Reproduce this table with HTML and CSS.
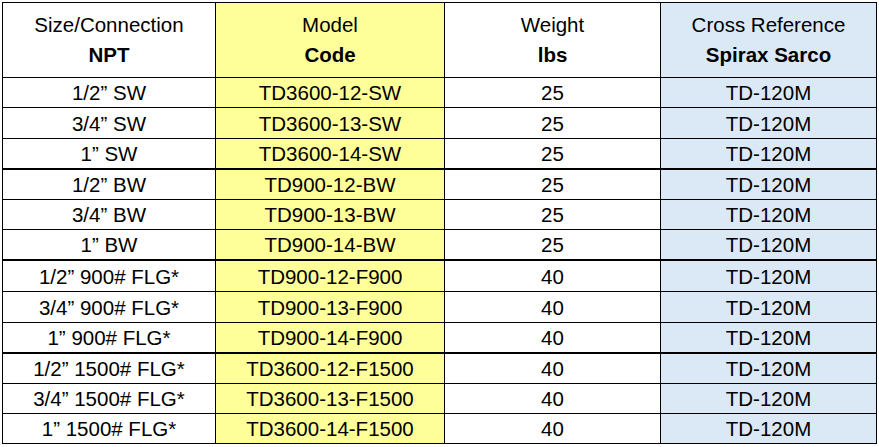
FILE: index.html
```html
<!DOCTYPE html>
<html>
<head>
<meta charset="utf-8">
<link rel="stylesheet" href="styles.css">
</head>
<body>
<div class="sheet">
  <div class="c h"><span>Size/Connection</span><b>NPT</b></div>
  <div class="c h y"><span>Model</span><b>Code</b></div>
  <div class="c h"><span>Weight</span><b>lbs</b></div>
  <div class="c h bl"><span>Cross Reference</span><b>Spirax Sarco</b></div>

  <div class="c r30">1/2” SW</div><div class="c y r30">TD3600-12-SW</div><div class="c r30">25</div><div class="c bl r30">TD-120M</div>
  <div class="c r31">3/4” SW</div><div class="c y r31">TD3600-13-SW</div><div class="c r31">25</div><div class="c bl r31">TD-120M</div>
  <div class="c r31 t">1” SW</div><div class="c y r31 t">TD3600-14-SW</div><div class="c r31 t">25</div><div class="c bl r31 t">TD-120M</div>

  <div class="c r30">1/2” BW</div><div class="c y r30">TD900-12-BW</div><div class="c r30">25</div><div class="c bl r30">TD-120M</div>
  <div class="c r30">3/4” BW</div><div class="c y r30">TD900-13-BW</div><div class="c r30">25</div><div class="c bl r30">TD-120M</div>
  <div class="c r31 t">1” BW</div><div class="c y r31 t">TD900-14-BW</div><div class="c r31 t">25</div><div class="c bl r31 t">TD-120M</div>

  <div class="c r31">1/2” 900# FLG*</div><div class="c y r31">TD900-12-F900</div><div class="c r31">40</div><div class="c bl r31">TD-120M</div>
  <div class="c r31">3/4” 900# FLG*</div><div class="c y r31">TD900-13-F900</div><div class="c r31">40</div><div class="c bl r31">TD-120M</div>
  <div class="c r31 t">1” 900# FLG*</div><div class="c y r31 t">TD900-14-F900</div><div class="c r31 t">40</div><div class="c bl r31 t">TD-120M</div>

  <div class="c r30">1/2” 1500# FLG*</div><div class="c y r30">TD3600-12-F1500</div><div class="c r30">40</div><div class="c bl r30">TD-120M</div>
  <div class="c r30">3/4” 1500# FLG*</div><div class="c y r30">TD3600-13-F1500</div><div class="c r30">40</div><div class="c bl r30">TD-120M</div>
  <div class="c r30">1” 1500# FLG*</div><div class="c y r30">TD3600-14-F1500</div><div class="c r30">40</div><div class="c bl r30">TD-120M</div>
</div>
</body>
</html>
```
FILE: styles.css
```css
html, body {
  margin: 0;
  padding: 0;
  background: #ffffff;
}
.sheet {
  margin: 2px 0 0 2px;
  display: grid;
  grid-template-columns: 213px 229px 216px 216px;
  width: max-content;
  border-top: 1px solid #000;
  border-left: 1px solid #000;
  font-family: "Liberation Sans", Arial, sans-serif;
  font-size: 20.5px;
  color: #000;
}
.c {
  box-sizing: border-box;
  border-right: 1px solid #000;
  border-bottom: 1px solid #000;
  display: flex;
  align-items: center;
  justify-content: center;
  white-space: nowrap;
  padding-top: 1px;
}
.h {
  height: 75px;
  flex-direction: column;
  line-height: 30px;
  padding-top: 0;
}
.h b {
  font-weight: bold;
}
.r30 { height: 30px; }
.r31 { height: 31px; }
.t { border-bottom-width: 2px; }
.y { background: #ffff99; }
.bl { background: #dbe9f7; }
```
